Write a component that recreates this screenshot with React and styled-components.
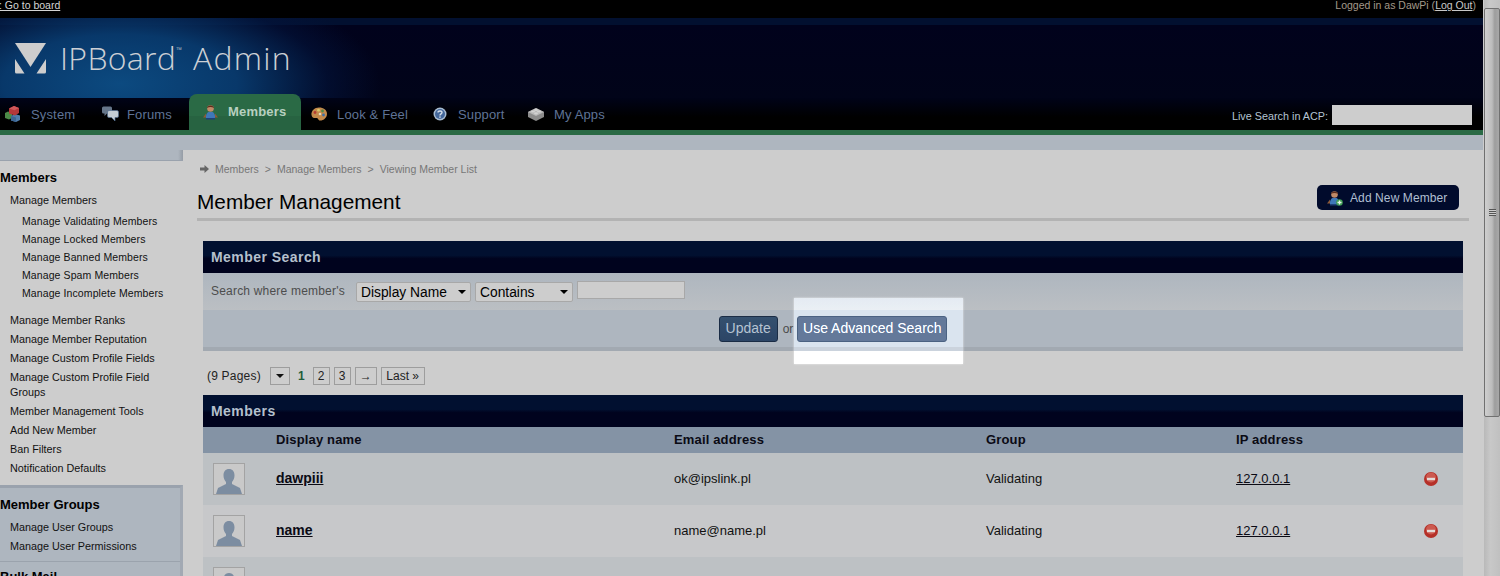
import { createGlobalStyle } from 'styled-components'
import styled from 'styled-components'

const members = [
  { name: 'dawpiii', email: 'ok@ipslink.pl' },
  { name: 'name', email: 'name@name.pl' },
  { name: '', email: '' },
]

const subLinks = ['Manage Validating Members', 'Manage Locked Members', 'Manage Banned Members', 'Manage Spam Members', 'Manage Incomplete Members']

function SystemIcon() {
  return (
    <svg width='16' height='16' viewBox='0 0 16 16'>
      <path d='M0 7l3-1.500 4 1.500v5l-3 1.500L0 12z' fill='#4c8a48' />
      <path d='M6 10l4-2 5 1.500v4.500l-4 2-5-1.500z' fill='#4f7cab' />
      <path d='M6 10l5 1.500V16l-5-1.500z' fill='#3b6593' />
      <path d='M4 2.500L9 0l5 2v5l-4 2.500-6-2z' fill='#b4383a' />
      <path d='M4 2.500L9 0l5 2-4.500 2.200z' fill='#d0585a' />
    </svg>
  )
}

function ForumsIcon() {
  return (
    <svg width='18' height='16' viewBox='0 0 18 16'>
      <path d='M1 2q0-1.500 1.500-1.500h7Q11 .5 11 2v4q0 1.500-1.500 1.500H6L3.500 10V7.500h-1Q1 7.500 1 6z' fill='#66768a' />
      <path d='M6.500 6q0-1.500 1.500-1.500h8Q17.500 4.500 17.500 6v4q0 1.500-1.500 1.500h-2V15l-3.500-3.500H8q-1.500 0-1.500-1.500z' fill='#c3ccd4' stroke='#4f6a8c' strokeWidth='.7' />
    </svg>
  )
}

function PersonIcon({ plus }) {
  return (
    <svg width='16' height='16' viewBox='0 0 16 16'>
      <circle cx='7.500' cy='4.500' r='3.300' fill='#c08a68' />
      <path d='M4 4C4 .5 11 .5 11 4 9 2.800 6 2.800 4 4z' fill='#5c2c1c' />
      <path d='M3 15c-.5-4 1-6.500 2.500-7h4c1.500.5 3 3 2.500 7z' fill='#3f78b8' />
      <path d='M0 13.500l3-4v4zM15 13.500l-3-4v4z' fill='#8c5a3a' />
      <rect x='3' y='14' width='9' height='1.500' fill='#1f3f78' />
      {plus && <circle cx='12.500' cy='12.500' r='3.300' fill='#3d9a52' />}
      {plus && <path d='M12.500 10.500v4M10.500 12.500h4' stroke='#e8f5e8' strokeWidth='1.300' />}
    </svg>
  )
}

function PaletteIcon() {
  return (
    <svg width='16' height='14' viewBox='0 0 16 14'>
      <path d='M8 .5c4.500 0 8 2.400 8 6.200S13 13.500 9 13.500c-2 0-1.500-2.500-3.500-2.500S1 11.500.5 8C0 4 3.500.5 8 .5z' fill='#c48a4c' />
      <circle cx='4' cy='5.500' r='1.400' fill='#b53b32' />
      <circle cx='7.500' cy='3.200' r='1.400' fill='#d8c86a' />
      <circle cx='11.500' cy='4' r='1.400' fill='#4f8a4a' />
      <circle cx='12.500' cy='8' r='1.400' fill='#3f70a8' />
      <circle cx='9' cy='7' r='1.300' fill='#e6d8b8' />
    </svg>
  )
}

function HelpIcon() {
  return (
    <svg width='14' height='14' viewBox='0 0 14 14'>
      <circle cx='7' cy='7' r='6.500' fill='#a9bdd2' />
      <circle cx='7' cy='7' r='5' fill='#44689c' />
      <path d='M5 5.500C5 3.500 9 3.500 9 5.500 9 7 7 6.800 7 8.500' fill='none' stroke='#d5dfea' strokeWidth='1.400' />
      <rect x='6.300' y='9.400' width='1.400' height='1.400' fill='#d5dfea' />
    </svg>
  )
}

function BrickIcon() {
  return (
    <svg width='16' height='14' viewBox='0 0 16 14'>
      <path d='M0 5l8-4 8 4v5l-8 4-8-4z' fill='#8c8c8c' />
      <path d='M0 5l8 4 8-4-8-4z' fill='#b9b9b9' />
      <ellipse cx='5' cy='4.500' rx='2' ry='1.100' fill='#d2d2d2' />
      <ellipse cx='11' cy='4.500' rx='2' ry='1.100' fill='#d2d2d2' />
      <ellipse cx='8' cy='3' rx='2' ry='1.100' fill='#d2d2d2' />
      <ellipse cx='8' cy='6.300' rx='2' ry='1.100' fill='#d2d2d2' />
    </svg>
  )
}

function LogoMark() {
  return (
    <svg width='31' height='31' viewBox='0 0 31 31'>
      <path d='M0 0h31L15.500 24z' fill='#cdcdcd' />
      <path d='M0 16l9.500 14.500H1.500Q0 30.500 0 29zM31 16L21.500 30.500h8Q31 30.500 31 29z' fill='#cdcdcd' />
    </svg>
  )
}

function RemoveIcon() {
  return (
    <svg width='14' height='14' viewBox='0 0 14 14'>
      <circle cx='7' cy='7' r='7' fill='#b53028' />
      <circle cx='7' cy='5.500' r='5' fill='#cc5a50' />
      <rect x='3' y='5.800' width='8' height='2.400' fill='#e4dcd8' />
    </svg>
  )
}

function Silhouette() {
  return (
    <svg width='30' height='30' viewBox='0 0 30 30'>
      <path d='M15 5c3.500 0 5.500 2.500 5.500 6.500 0 3-1.200 5-2.500 6.500v2l8 4 2 6H2l2-6 8-4v-2c-1.300-1.500-2.500-3.500-2.500-6.500C9.500 7.500 11.500 5 15 5z' fill='#7c8da1' />
    </svg>
  )
}

function CrumbIcon() {
  return (
    <svg width='9' height='8' viewBox='0 0 9 8'>
      <path d='M0 2.500h4.500V0L9 4 4.500 8V5.500H0z' fill='#666' />
    </svg>
  )
}

export default function App() {
  return (
    <>
      <GlobalStyle />
      <Viewport>
        <Page>
          <TopBar>
            <BoardLink>: Go to board</BoardLink>
            <LoggedIn>Logged in as DawPi (<u>Log Out</u>)</LoggedIn>
          </TopBar>
          <Header>
            <Logo>
              <LogoMark />
              <LogoText>IPBoard<Tm>™</Tm> <LogoAdmin>Admin</LogoAdmin></LogoText>
            </Logo>
          </Header>
          <TabBar>
            <Tabs>
              <Tab $w={92} $pl={5} $gap={10}><SystemIcon /><TabLabel>System</TabLabel></Tab>
              <Tab $w={88} $pl={9} $gap={8}><ForumsIcon /><TabLabel>Forums</TabLabel></Tab>
              <ActiveTab><PersonIcon /><ActiveLabel>Members</ActiveLabel></ActiveTab>
              <Tab $w={122} $pl={0} $gap={10}><PaletteIcon /><TabLabel>Look &amp; Feel</TabLabel></Tab>
              <Tab $w={95} $pl={0} $gap={11}><HelpIcon /><TabLabel>Support</TabLabel></Tab>
              <Tab $w={90} $pl={0} $gap={10}><BrickIcon /><TabLabel>My Apps</TabLabel></Tab>
            </Tabs>
            <LiveSearch>
              <LiveLabel>Live Search in ACP:</LiveLabel>
              <LiveInput />
            </LiveSearch>
          </TabBar>
          <Band />
          <Body>
            <Sidebar>
              <SideTop />
              <SideSection>
                <SideTitle>Members</SideTitle>
                <SideLink>Manage Members</SideLink>
                <SubList>
                  {subLinks.map((l) => <SubLink key={l}>{l}</SubLink>)}
                </SubList>
                <SideLink>Manage Member Ranks</SideLink>
                <SideLink>Manage Member Reputation</SideLink>
                <SideLink>Manage Custom Profile Fields</SideLink>
                <SideLink>Manage Custom Profile Field Groups</SideLink>
                <SideLink>Member Management Tools</SideLink>
                <SideLink>Add New Member</SideLink>
                <SideLink>Ban Filters</SideLink>
                <SideLink>Notification Defaults</SideLink>
              </SideSection>
              <GroupSection>
                <SideTitle>Member Groups</SideTitle>
                <SideLink>Manage User Groups</SideLink>
                <SideLink>Manage User Permissions</SideLink>
                <GroupDivider />
                <SideTitle>Bulk Mail</SideTitle>
              </GroupSection>
            </Sidebar>
            <Main>
              <Crumbs>
                <CrumbIcon />
                <span>Members</span><span>&gt;</span><span>Manage Members</span><span>&gt;</span><span>Viewing Member List</span>
              </Crumbs>
              <TitleRow>
                <Title>Member Management</Title>
                <AddButton><PersonIcon plus /><span>Add New Member</span></AddButton>
              </TitleRow>
              <Panel $mt={20}>
                <PanelHead>Member Search</PanelHead>
                <SearchRow>
                  <SearchLabel>Search where member's</SearchLabel>
                  <SelectWrap $w={115}><Select defaultValue='Display Name'><option>Display Name</option></Select></SelectWrap>
                  <SelectWrap $w={98}><Select defaultValue='Contains'><option>Contains</option></Select></SelectWrap>
                  <SearchInput />
                </SearchRow>
                <ActionRow>
                  <UpdateButton>Update</UpdateButton>
                  <OrText>or</OrText>
                  <AdvancedButton>Use Advanced Search</AdvancedButton>
                  <Highlight />
                </ActionRow>
              </Panel>
              <Pagination>
                <PagesText>(9 Pages)</PagesText>
                <PageBox $w={20}><DownCaret /></PageBox>
                <CurrentPage>1</CurrentPage>
                <PageBox $w={17}>2</PageBox>
                <PageBox $w={17}>3</PageBox>
                <PageBox $w={22}>→</PageBox>
                <PageBox $w={44}>Last »</PageBox>
              </Pagination>
              <Panel $mt={10}>
                <PanelHead>Members</PanelHead>
                <TableHead>
                  <span /><span>Display name</span><span>Email address</span><span>Group</span><span>IP address</span><span />
                </TableHead>
                {members.map((m, i) => (
                  <MemberRow key={i} $alt={i % 2 === 1}>
                    <Avatar><Silhouette /></Avatar>
                    <MemberName>{m.name}</MemberName>
                    <Cell>{m.email}</Cell>
                    <Cell>{m.name && 'Validating'}</Cell>
                    <IpLink>{m.name && '127.0.0.1'}</IpLink>
                    <RemoveCell>{m.name && <RemoveIcon />}</RemoveCell>
                  </MemberRow>
                ))}
              </Panel>
            </Main>
          </Body>
        </Page>
        <Scrollbar>
          <Thumb><Grip /></Thumb>
        </Scrollbar>
      </Viewport>
    </>
  )
}

const GlobalStyle = createGlobalStyle`
  html, body {
    margin: 0;
    height: 576px;
    overflow: hidden;
    background: #cdcdcd;
    font-family: "Liberation Sans", Arial, sans-serif;
  }
`

const Viewport = styled.div`
  display: flex;
  width: 1500px;
  height: 576px;
  overflow: hidden;
`

const Page = styled.div`
  width: 1483px;
  flex: none;
  overflow: hidden;
`

const TopBar = styled.div`
  display: flex;
  justify-content: space-between;
  height: 18px;
  padding-right: 7px;
  background: #000;
  font-size: 10.5px;
  line-height: 10px;
`

const BoardLink = styled.a`
  color: #d4d4d4;
  text-decoration: underline;
  margin-left: -1px;
  height: 11px;
`

const LoggedIn = styled.span`
  color: #a3998a;
  u { color: #c8c8c8; }
`

const Header = styled.div`
  height: 80px;
  background:
    radial-gradient(ellipse 260px 110px at 120px 66px, #0c4a80 0%, #08386a 45%, rgba(3, 20, 60, 0.6) 80%, transparent 100%),
    linear-gradient(#021030 0, #021030 7px, #01021c 7px, #010419 100%);
`

const Logo = styled.div`
  display: flex;
  align-items: center;
  gap: 15px;
  padding: 25px 0 0 15px;
`

const LogoText = styled.div`
  margin-top: -2px;
  margin-left: -1px;
  font-family: "Open Sans", sans-serif;
  font-size: 32px;
  font-weight: 300;
  line-height: 30px;
  color: #ccd0d5;
  letter-spacing: 0.3px;
`

const LogoAdmin = styled.span`
  letter-spacing: 1.3px;
`

const Tm = styled.sup`
  font-size: 8px;
  vertical-align: 17px;
  line-height: 0;
  margin: 0 2px 0 0;
`

const TabBar = styled.div`
  display: flex;
  justify-content: space-between;
  align-items: flex-end;
  height: 32px;
  background: linear-gradient(#000318, #000 60%);
  border-bottom: 5px solid #2a6a45;
`

const Tabs = styled.div`
  display: flex;
  align-items: flex-end;
  height: 100%;
`

const Tab = styled.div`
  display: flex;
  align-items: center;
  gap: ${(p) => p.$gap}px;
  width: ${(p) => p.$w}px;
  height: 32px;
  padding-left: ${(p) => p.$pl}px;
  box-sizing: border-box;
  flex: none;
`

const TabLabel = styled.span`
  font-size: 13px;
  letter-spacing: 0.15px;
  color: #5f7396;
  white-space: nowrap;
`

const ActiveTab = styled.div`
  display: flex;
  align-items: center;
  gap: 9px;
  box-sizing: border-box;
  width: 112px;
  height: 36px;
  margin: -4px 10px 0 9px;
  padding: 0 0 0 14px;
  flex: none;
  border-radius: 8px 8px 0 0;
  background: linear-gradient(#2a6a45 60%, #276341 60%);
`

const ActiveLabel = styled.span`
  font-size: 13px;
  font-weight: bold;
  letter-spacing: 0.2px;
  color: #b8d0c0;
  margin-top: -1px;
`

const LiveSearch = styled.div`
  display: flex;
  align-items: center;
  gap: 4px;
  height: 32px;
  padding-right: 11px;
  font-size: 10.8px;
  color: #b4c4d4;
`

const LiveLabel = styled.span`
  margin-top: 4px;
`

const LiveInput = styled.div`
  width: 140px;
  height: 20px;
  margin-top: 2px;
  background: #cdcdcd;
`

const Band = styled.div`
  height: 15px;
  background: #aeb6bf;
`

const Body = styled.div`
  display: flex;
  height: 426px;
`

const Sidebar = styled.aside`
  width: 183px;
  flex: none;
  background: #cdcdcd;
`

const SideTop = styled.div`
  height: 10px;
  background: linear-gradient(90deg, #aeb6bf 178px, #959ca5);
  border-bottom: 1px solid #9aa2ad;
`

const SideSection = styled.div`
  padding-top: 8px;
  height: 324px;
  box-sizing: border-box;
`

const GroupSection = styled.div`
  height: 91px;
  box-sizing: border-box;
  padding-top: 8px;
  background: #aeb6bf;
  border-top: 3px solid #9aa2ad;
  border-right: 3px solid #a2a9b3;
  overflow: hidden;
`

const SideTitle = styled.h3`
  margin: 0 0 3px;
  font-size: 13px;
  line-height: 18px;
  font-weight: bold;
  color: #000;
`

const SideLink = styled.a`
  display: block;
  padding: 3px 0 0 10px;
  font-size: 10.8px;
  line-height: 15px;
  margin-bottom: 1px;
  color: #111;
`

const SubList = styled.div`
  padding: 3px 0 8px 22px;
`

const SubLink = styled.a`
  display: block;
  font-size: 10.5px;
  letter-spacing: 0.1px;
  line-height: 18px;
  color: #111;
  white-space: nowrap;
`

const GroupDivider = styled.div`
  height: 1px;
  margin-top: 7px;
  margin-bottom: 6px;
  background: #9ba3ad;
`

const Main = styled.main`
  flex: 1;
  min-width: 0;
  padding: 0 14px;
  background: #cdcdcd;
`

const Crumbs = styled.div`
  display: flex;
  align-items: center;
  gap: 6px;
  height: 37px;
  padding-left: 3px;
  font-size: 10.5px;
  color: #777;
  box-sizing: border-box;
`

const TitleRow = styled.div`
  display: flex;
  justify-content: space-between;
  align-items: flex-start;
  height: 31px;
  border-bottom: 3px solid #b3b3b3;
`

const Title = styled.h1`
  margin: 0;
  padding-top: 2px;
  font-size: 20.8px;
  line-height: 26px;
  font-weight: normal;
  color: #000;
`

const AddButton = styled.div`
  display: flex;
  align-items: center;
  gap: 7px;
  box-sizing: border-box;
  width: 142px;
  height: 25px;
  margin: -2px 10px 0 0;
  padding-left: 10px;
  border-radius: 5px;
  background: #010b2c;
  font-size: 12px;
  color: #b0bfd2;
  letter-spacing: 0.1px;
`

const Panel = styled.section`
  margin: ${(p) => p.$mt}px 6px 0;
  width: 1260px;
`

const PanelHead = styled.div`
  height: 32px;
  padding-left: 8px;
  line-height: 32px;
  font-size: 14px;
  font-weight: bold;
  letter-spacing: 0.45px;
  color: #b4c0cd;
  background: linear-gradient(#011030 45%, #00031e 55%);
`

const SearchRow = styled.div`
  display: flex;
  align-items: center;
  height: 37px;
  padding-left: 8px;
  background: linear-gradient(#aeb6bf, #bbbfc3);
`

const SearchLabel = styled.span`
  width: 145px;
  margin-top: -1px;
  font-size: 12px;
  letter-spacing: 0.2px;
  color: #4d4d4d;
  flex: none;
`

const SelectWrap = styled.div`
  position: relative;
  width: ${(p) => p.$w}px;
  height: 20px;
  margin-right: 4px;
  flex: none;
  &::after {
    content: '';
    position: absolute;
    right: 5px;
    top: 8px;
    border: 4px solid transparent;
    border-top-color: #000;
    border-bottom: 0;
  }
`

const Select = styled.select`
  appearance: none;
  display: block;
  width: 100%;
  height: 100%;
  box-sizing: border-box;
  padding: 2px 4px 0;
  border: 1px solid #a8a8a8;
  border-radius: 2px;
  background: #cdcdcd;
  color: #000;
  font: 13.8px "Liberation Sans", sans-serif;
`

const SearchInput = styled.div`
  width: 108px;
  height: 18px;
  margin-top: -3px;
  box-sizing: border-box;
  border: 1px solid #a8a8a8;
  background: #cdcdcd;
`

const ActionRow = styled.div`
  position: relative;
  display: flex;
  align-items: center;
  justify-content: center;
  height: 37px;
  gap: 5px;
  background: #aeb6bf;
  border-bottom: 4px solid #a2a9b1;
`

const UpdateButton = styled.div`
  box-sizing: border-box;
  width: 59px;
  height: 26px;
  border: 1px solid #1a2c45;
  border-radius: 3px;
  background: linear-gradient(#34506f, #2c4566);
  color: #b6c3d2;
  font-size: 14px;
  line-height: 23px;
  text-align: center;
`

const OrText = styled.span`
  font-size: 12px;
  color: #4a4a4a;
`

const AdvancedButton = styled(UpdateButton)`
  width: 150px;
  margin-left: -1px;
  border-color: #3c4e68;
  background: #50617b;
  color: #d4d8de;
`

const Highlight = styled.div`
  position: absolute;
  left: 591px;
  top: -12px;
  width: 169px;
  height: 66px;
  backdrop-filter: brightness(1.25);
  box-shadow: 0 0 2px rgba(255, 255, 255, 0.7);
`

const Pagination = styled.div`
  display: flex;
  align-items: center;
  gap: 4px;
  margin: 16px 0 0 10px;
  height: 18px;
  font-size: 12px;
  color: #222;
`

const PagesText = styled.span`
  width: 59px;
  flex: none;
  letter-spacing: 0.2px;
`

const PageBox = styled.span`
  display: flex;
  align-items: center;
  justify-content: center;
  width: ${(p) => p.$w}px;
  height: 18px;
  box-sizing: border-box;
  border: 1px solid #9d9d9d;
  flex: none;
`

const DownCaret = styled.i`
  border: 4px solid transparent;
  border-top-color: #111;
  border-bottom: 0;
`

const CurrentPage = styled.b`
  margin: 0 4px;
  color: #1f5c3a;
`

const TableHead = styled.div`
  display: grid;
  grid-template-columns: 73px 398px 312px 250px 188px 39px;
  align-items: center;
  box-sizing: border-box;
  height: 26px;
  padding-bottom: 2px;
  background: #8493a5;
  font-size: 13px;
  font-weight: bold;
  letter-spacing: 0.15px;
  color: #0a0a14;
`

const MemberRow = styled.div`
  display: grid;
  grid-template-columns: 73px 398px 312px 250px 188px 39px;
  align-items: center;
  height: 52px;
  background: ${(p) => (p.$alt ? '#c7c8ca' : '#bdc1c4')};
  font-size: 13px;
  color: #111;
`

const Avatar = styled.div`
  display: flex;
  align-items: flex-end;
  justify-content: center;
  box-sizing: border-box;
  width: 32px;
  height: 32px;
  margin-left: 10px;
  border: 1px solid #a3a3a3;
  background: #c9c9c9;
`

const Cell = styled.span`
  margin-top: -2px;
`

const RemoveCell = styled.span`
  display: flex;
`

const MemberName = styled.a`
  margin-top: -2px;
  font-size: 14px;
  font-weight: bold;
  text-decoration: underline;
  color: #0a0a14;
`

const IpLink = styled.a`
  margin-top: -2px;
  text-decoration: underline;
  color: #0a0a14;
`

const Scrollbar = styled.div`
  width: 17px;
  flex: none;
  height: 576px;
  box-sizing: border-box;
  border-left: 1px solid #cdcdcd;
  background: linear-gradient(90deg, #b9b9b9, #c8c8c8 40%, #c0c0c0);
`

const Thumb = styled.div`
  display: flex;
  align-items: center;
  justify-content: center;
  height: 409px;
  margin-top: 8px;
  border: 1px solid #707070;
  border-radius: 2px;
  box-sizing: border-box;
  background: linear-gradient(90deg, #cfcfcf, #bcbcbc 50%, #9d9d9d 70%, #a8a8a8);
`

const Grip = styled.div`
  width: 7px;
  height: 7px;
  background: repeating-linear-gradient(#555 0 1px, #ccc 1px 2px);
`
